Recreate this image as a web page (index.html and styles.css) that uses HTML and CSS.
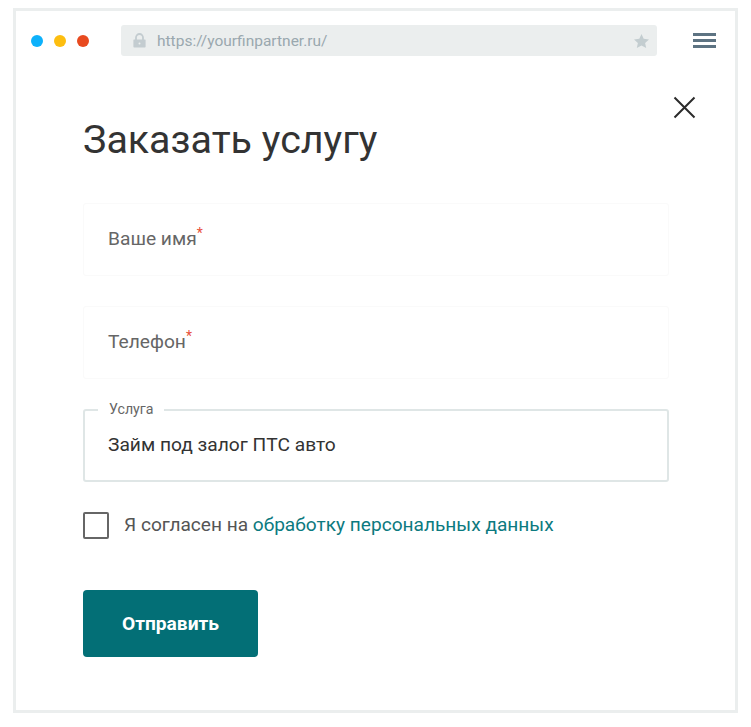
FILE: index.html
```html
<!DOCTYPE html>
<html lang="ru">
<head>
  <meta charset="UTF-8" />
  <meta name="viewport" content="width=device-width, initial-scale=1.0"/>
  <title>Заказать услугу</title>
  <link rel="stylesheet" href="styles.css">
</head>
<body>

  <div class="window">
    <div class="topbar">
      <div class="dots">
        <span class="dot dot-blue"></span>
        <span class="dot dot-yellow"></span>
        <span class="dot dot-red"></span>
      </div>
      <div class="address">
        <svg class="lock" width="13" height="15" viewBox="0 0 13 15">
          <path d="M3 7V4.500a3.500 3.500 0 0 1 7 0V7" fill="none" stroke="#c3ccd0" stroke-width="1.8"/>
          <path d="M1 6.500h11a.6.6 0 0 1 .6.6v6.600a.8.8 0 0 1-.8.8H1.200a.8.8 0 0 1-.8-.8V7.100a.6.6 0 0 1 .6-.6z" fill="#c3ccd0"/>
          <circle cx="6.500" cy="10.500" r="1" fill="#ebeeee"/>
        </svg>
        <span class="url">https://yourfinpartner.ru/</span>
        <svg class="star" width="15" height="14" viewBox="0 0 15 14">
          <path d="M7.500 0l2.200 4.800 5.300.6-3.900 3.500 1.100 5.100-4.700-2.600L2.800 14l1.100-5.100L0 5.400l5.300-.6z" fill="#c3cdd0"/>
        </svg>
      </div>
      <div class="burger">
        <span></span>
        <span></span>
        <span></span>
      </div>
    </div>

    <svg class="close" width="23" height="23" viewBox="0 0 23 23">
      <path d="M1.500 1.500l20 20M21.500 1.500l-20 20" fill="none" stroke="#2b2b2b" stroke-width="2"/>
    </svg>

    <form class="order-form">
      <h1>Заказать услугу</h1>

      <div class="field field-empty">
        <span class="placeholder">Ваше имя<i>*</i></span>
      </div>
      <div class="field field-empty">
        <span class="placeholder">Телефон<i>*</i></span>
      </div>
      <div class="field field-filled">
        <span class="legend">Услуга</span>
        <span class="value">Займ под залог ПТС авто</span>
      </div>

      <div class="agree">
        <span class="checkbox"></span>
        <span class="agree-text">Я согласен на <a href="#">обработку персональных данных</a></span>
      </div>

      <button type="button">Отправить</button>
    </form>
  </div>

</body>
</html>
```

FILE: styles.css
```css
body {
  margin: 0;
  background: #fff;
  font-family: Roboto, 'Noto Sans', sans-serif;
  color: #333;
}

.window {
  position: relative;
  box-sizing: border-box;
  width: 725px;
  height: 705px;
  margin: 8px 13px;
  border: 3px solid #ebeeee;
}

.topbar {
  display: flex;
  align-items: center;
  height: 31px;
  padding: 14px 0 0 15px;
}

.dots {
  display: flex;
  gap: 11px;
  width: 90px;
}

.dot {
  width: 12px;
  height: 12px;
  border-radius: 50%;
}

.dot-blue { background: #0db1fb; }
.dot-yellow { background: #fdbe10; }
.dot-red { background: #e84a1f; }

.address {
  display: flex;
  align-items: center;
  box-sizing: border-box;
  width: 536px;
  height: 31px;
  padding: 0 8px 0 12px;
  background: #ebeeee;
  border-radius: 3px;
}

.url {
  flex: 1;
  margin-left: 11px;
  font-size: 15.5px;
  color: #9aa8af;
}

.burger {
  display: flex;
  flex-direction: column;
  gap: 3px;
  width: 23px;
  margin-left: 36px;
}

.burger span {
  height: 3px;
  background: #5d7382;
}

.close {
  position: absolute;
  top: 85px;
  left: 657px;
}

.order-form {
  display: flex;
  flex-direction: column;
  align-items: flex-start;
  padding: 0 0 0 67px;
}

h1 {
  margin: 61px 0 40px;
  font-size: 39.4px;
  line-height: 46px;
  font-weight: 400;
  color: #333;
}

.field {
  position: relative;
  box-sizing: border-box;
  display: flex;
  align-items: center;
  width: 586px;
  height: 73px;
  margin-bottom: 30px;
  padding: 0 24px;
  border-radius: 3px;
  font-size: 19.2px;
}

.field-empty {
  border: 1px solid #fafafa;
  padding-bottom: 2px;
  color: #666;
}

.placeholder i {
  position: relative;
  top: -7px;
  font-style: normal;
  font-size: 14px;
  color: #e8503a;
  line-height: 0;
}

.field-filled {
  border: 2px solid #dfe6e6;
  padding-left: 23px;
  padding-bottom: 3px;
  color: #333;
}

.legend {
  position: absolute;
  top: -11px;
  left: 13px;
  padding: 0 11px;
  background: #fff;
  font-size: 14.2px;
  line-height: 18px;
  color: #666;
}

.agree {
  display: flex;
  align-items: center;
  gap: 15px;
  margin-bottom: 51px;
  font-size: 19.1px;
  color: #555;
}

.agree-text {
  margin-bottom: 2px;
}

.checkbox {
  box-sizing: border-box;
  width: 26px;
  height: 27px;
  border: 2px solid #666;
  border-radius: 2px;
}

.agree a {
  color: #0c7a80;
  text-decoration: none;
}

button {
  width: 175px;
  height: 67px;
  padding: 0;
  background: #036f76;
  border: none;
  border-radius: 4px;
  font-family: inherit;
  font-size: 19.2px;
  font-weight: 700;
  color: #fff;
}
```
